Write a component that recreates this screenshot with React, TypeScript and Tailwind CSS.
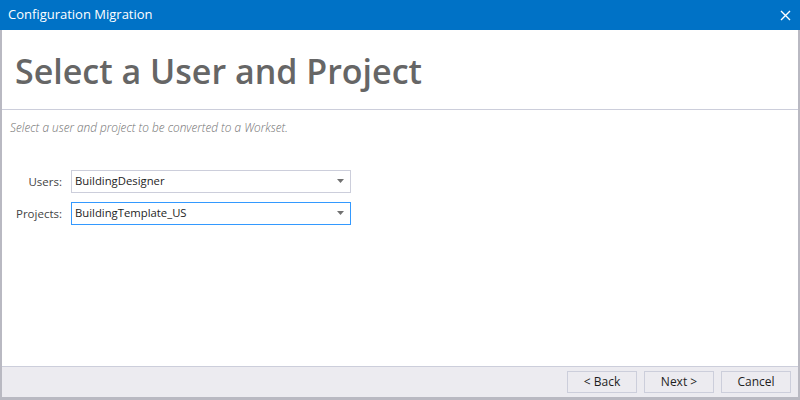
import React from "react";

const FONT = { fontFamily: '"Open Sans", "Noto Sans", sans-serif' };

function Select({ value, focused }: { value: string; focused?: boolean }) {
  return (
    <div
      className={`flex h-[23px] w-[280px] items-center justify-between bg-white pl-[3px] pr-[6px] text-[11.3px] text-[#1e1e1e] border ${
        focused ? "border-[#3399ff]" : "border-[#cccedb]"
      }`}
    >
      <span>{value}</span>
      <svg width="7" height="4" viewBox="0 0 7 4">
        <path d="M0 0h7L3.5 4z" fill="#717171" />
      </svg>
    </div>
  );
}

function Btn({ label }: { label: string }) {
  return (
    <button className="flex h-[22px] w-[70px] items-center justify-center border border-[#cccedb] bg-[#ecebf0] text-[12px] text-[#1e1e1e]">
      {label}
    </button>
  );
}

export default function App() {
  return (
    <div className="flex h-[400px] w-[800px] flex-col bg-[#b9b9c2]" style={FONT}>
      {/* title bar */}
      <div className="flex h-[30px] shrink-0 items-center justify-between bg-[#0072c6] pl-[8px] pr-[9px] text-white">
        <span className="text-[13px]">Configuration Migration</span>
        <svg width="11" height="11" viewBox="0 0 11 11">
          <path d="M1 1l9 9M10 1l-9 9" stroke="#fff" strokeWidth="1.4" />
        </svg>
      </div>

      <div className="mx-[2px] mb-[3px] flex flex-1 flex-col bg-white">
        {/* header */}
        <div className="flex h-[80px] shrink-0 items-center border-b border-[#cccedb] pl-[13px] pt-[2px]">
          <h1 className="text-[34px] font-semibold leading-none text-[#666666]">
            Select a User and Project
          </h1>
        </div>

        {/* body */}
        <div className="flex flex-1 flex-col pl-[8px] pt-[9px]">
          <p className="text-[11.8px] font-light italic text-[#717171]">
            Select a user and project to be converted to a Workset.
          </p>
          <div className="mt-[33px] grid grid-cols-[52px_auto] items-center gap-x-[9px] gap-y-[9px] text-[11.5px] text-[#444444]">
            <span className="text-right">Users:</span>
            <Select value="BuildingDesigner" />
            <span className="text-right">Projects:</span>
            <Select value="BuildingTemplate_US" focused />
          </div>
        </div>

        {/* footer */}
        <div className="flex h-[31px] shrink-0 items-center justify-end gap-[7px] border-t border-[#cccedb] bg-[#ecebf0] pr-[7px]">
          <Btn label="< Back" />
          <Btn label="Next >" />
          <Btn label="Cancel" />
        </div>
      </div>
    </div>
  );
}
